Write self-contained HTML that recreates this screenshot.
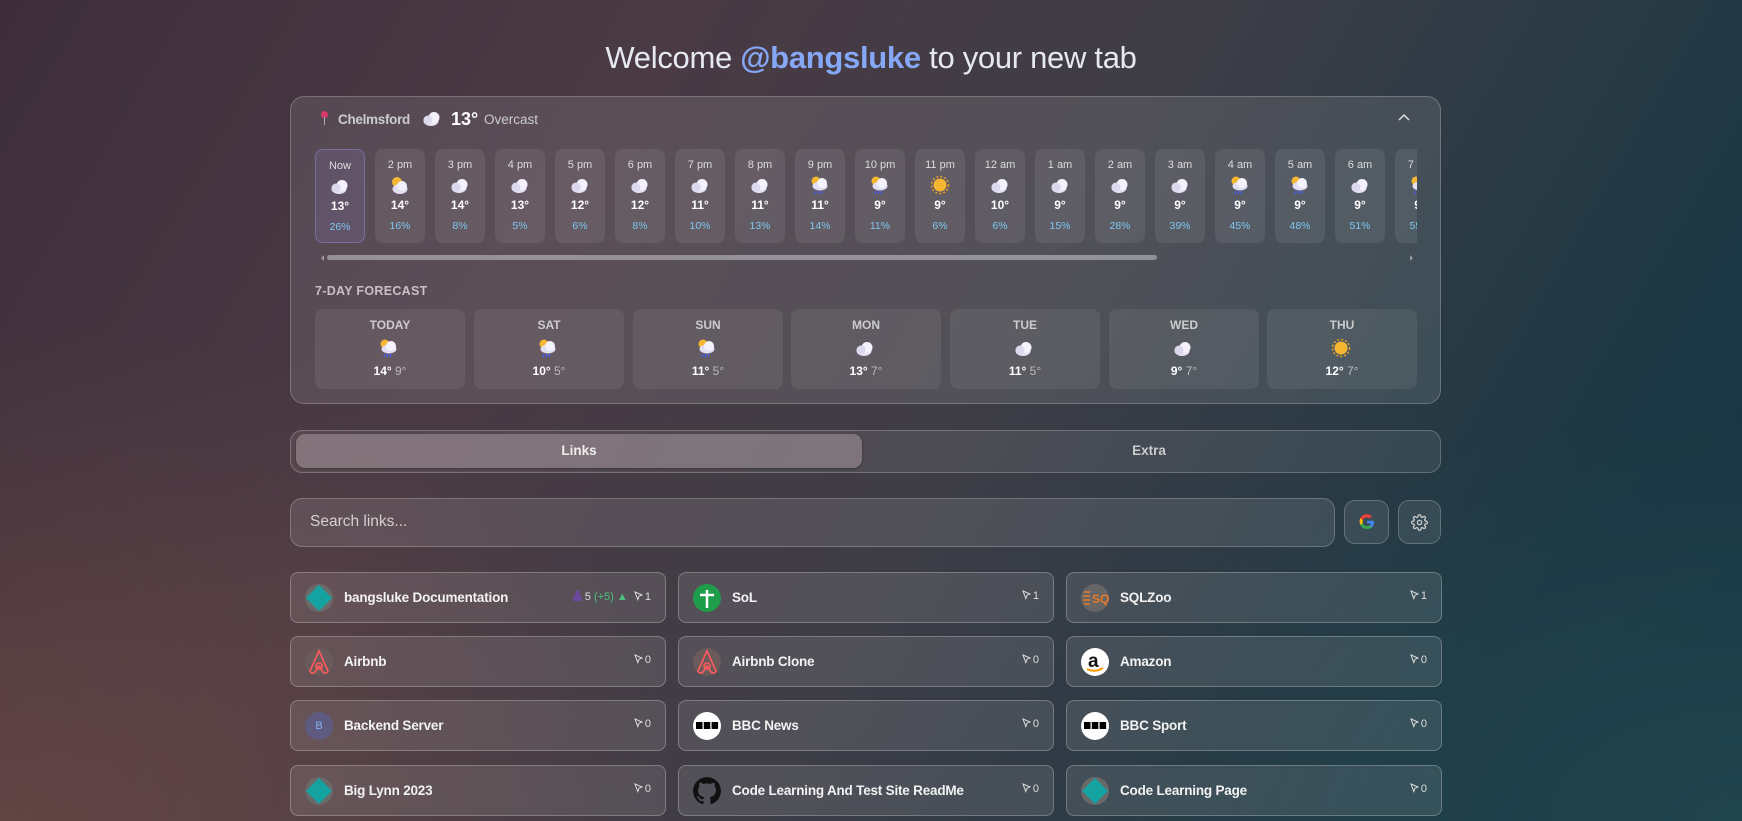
<!DOCTYPE html>
<html><head><meta charset="utf-8"><style>
*{box-sizing:border-box;margin:0;padding:0}
body{width:1742px;height:821px;overflow:hidden;font-family:"Liberation Sans",sans-serif;color:#fff;position:relative;
background:linear-gradient(120deg,#3d2e3a 0%,#4a3a44 30%,#3e3d46 55%,#1c3844 85%,#173844 100%);}
.bgo{position:absolute;inset:0;background:radial-gradient(ellipse 700px 500px at 0% 100%,rgba(120,80,70,.55),transparent),radial-gradient(ellipse 700px 400px at 100% 100%,rgba(40,80,85,.5),transparent)}
.a{position:absolute}
h1{position:absolute;top:40px;left:0;width:1742px;text-align:center;font-size:31px;font-weight:400;color:#e6e8f2;letter-spacing:-.3px}
h1 b{color:#86a7f5;font-weight:700}
.glass{background:rgba(255,255,255,.09);border:1px solid rgba(255,255,255,.22);border-radius:14px}
.hr{position:absolute;top:0;width:50px;height:94px;border-radius:8px;background:rgba(255,255,255,.08);text-align:center}
.hr .t{font-size:11px;color:#ddd;margin-top:10px}
.hr svg{display:block;margin:4px auto 0}
.hr .tp{font-size:12px;font-weight:700;margin-top:3px}
.hr .p{font-size:10.5px;color:#7ec8ef;margin-top:8px}
.dy{position:absolute;top:309px;width:150px;height:80px;border-radius:8px;background:rgba(255,255,255,.07);text-align:center}
.dy .n{font-size:12px;font-weight:700;color:#ccc;margin-top:9px}
.dy svg{display:block;margin:6px auto 0}
.dy .tp{font-size:12px;margin-top:4px;color:#bbb}.dy .tp b{color:#fff}
.lk{position:absolute;width:376px;height:51px;border-radius:8px;background:rgba(255,255,255,.1);border:1px solid rgba(255,255,255,.25)}
.lk .ic{position:absolute;left:14px;top:11px;width:28px;height:28px;border-radius:50%;overflow:hidden}
.lk .nm{position:absolute;left:53px;top:17px;font-size:13.5px;font-weight:700;color:#f2f2f2;letter-spacing:-.2px}
.lk .c{position:absolute;right:14px;top:17px;font-size:11px;color:#ddd}
.cur{display:inline-block;width:9px;height:10px;vertical-align:-1px;margin-right:2px}
</style></head><body><div class="bgo"></div>
<svg width="0" height="0" style="position:absolute"><defs>
<g id="cl"><ellipse cx="10" cy="13" rx="7.5" ry="5" fill="#e6e2f4"/><circle cx="13" cy="9.5" r="5.5" fill="#f4f2fc"/><circle cx="7" cy="12" r="4.5" fill="#dcd8ee"/></g>
<g id="sc"><circle cx="8" cy="7" r="5" fill="#f5b731"/><ellipse cx="11" cy="14" rx="7.5" ry="5" fill="#e2def4"/><circle cx="13" cy="11" r="5" fill="#f2f0fc"/></g>
<g id="rn"><circle cx="7" cy="6" r="4.5" fill="#f5b731"/><ellipse cx="11" cy="11" rx="7.5" ry="4.5" fill="#e2def4"/><circle cx="13" cy="8" r="5" fill="#f4f2fc"/><path d="M7 16l-1 3M10 16l-1 3M13 16l-1 3" stroke="#4a5de8" stroke-width="1.5"/></g>
<g id="sn"><circle cx="11" cy="10" r="6.5" fill="#f5b731"/><circle cx="11" cy="10" r="8.5" fill="none" stroke="#f0a020" stroke-width="1.5" stroke-dasharray="2 2"/></g>
<path id="cu" d="M1 1l7 3-3 1.2-1.2 3.3z" fill="none" stroke="#ddd" stroke-width="1"/>
</defs></svg>
<h1>Welcome <b>@bangsluke</b> to your new tab</h1>
<div class="a glass" style="left:290px;top:96px;width:1151px;height:308px;background:rgba(255,255,255,.1)"></div>
<div class="a" style="left:321px;top:111px;width:7px;height:7px;border-radius:50%;background:#d8396a"></div>
<div class="a" style="left:324px;top:117px;width:1px;height:8px;background:#aaa"></div>
<div class="a" style="left:338px;top:112px;font-size:13.5px;font-weight:700;color:#ccc;letter-spacing:-.3px">Chelmsford</div>
<svg class="a" style="left:421px;top:108px" width="22" height="20"><use href="#cl"/></svg>
<div class="a" style="left:451px;top:109px;font-size:18px;font-weight:700">13°</div>
<div class="a" style="left:484px;top:112px;font-size:13.5px;color:#ccc">Overcast</div>
<svg class="a" style="left:1398px;top:113px" width="12" height="8"><path d="M1 7l5-5 5 5" stroke="#ddd" stroke-width="1.5" fill="none"/></svg>
<div class="a" style="left:315px;top:149px;width:1102px;height:96px;overflow:hidden">
<div class="hr" style="left:0;background:rgba(140,130,200,.18);border:1px solid rgba(150,150,230,.45)"><div class="t">Now</div><svg width="22" height="20"><use href="#cl"/></svg><div class="tp">13°</div><div class="p">26%</div></div>
<div class="hr" style="left:60px"><div class="t">2 pm</div><svg width="22" height="20"><use href="#sc"/></svg><div class="tp">14°</div><div class="p">16%</div></div>
<div class="hr" style="left:120px"><div class="t">3 pm</div><svg width="22" height="20"><use href="#cl"/></svg><div class="tp">14°</div><div class="p">8%</div></div>
<div class="hr" style="left:180px"><div class="t">4 pm</div><svg width="22" height="20"><use href="#cl"/></svg><div class="tp">13°</div><div class="p">5%</div></div>
<div class="hr" style="left:240px"><div class="t">5 pm</div><svg width="22" height="20"><use href="#cl"/></svg><div class="tp">12°</div><div class="p">6%</div></div>
<div class="hr" style="left:300px"><div class="t">6 pm</div><svg width="22" height="20"><use href="#cl"/></svg><div class="tp">12°</div><div class="p">8%</div></div>
<div class="hr" style="left:360px"><div class="t">7 pm</div><svg width="22" height="20"><use href="#cl"/></svg><div class="tp">11°</div><div class="p">10%</div></div>
<div class="hr" style="left:420px"><div class="t">8 pm</div><svg width="22" height="20"><use href="#cl"/></svg><div class="tp">11°</div><div class="p">13%</div></div>
<div class="hr" style="left:480px"><div class="t">9 pm</div><svg width="22" height="20"><use href="#rn"/></svg><div class="tp">11°</div><div class="p">14%</div></div>
<div class="hr" style="left:540px"><div class="t">10 pm</div><svg width="22" height="20"><use href="#rn"/></svg><div class="tp">9°</div><div class="p">11%</div></div>
<div class="hr" style="left:600px"><div class="t">11 pm</div><svg width="22" height="20"><use href="#sn"/></svg><div class="tp">9°</div><div class="p">6%</div></div>
<div class="hr" style="left:660px"><div class="t">12 am</div><svg width="22" height="20"><use href="#cl"/></svg><div class="tp">10°</div><div class="p">6%</div></div>
<div class="hr" style="left:720px"><div class="t">1 am</div><svg width="22" height="20"><use href="#cl"/></svg><div class="tp">9°</div><div class="p">15%</div></div>
<div class="hr" style="left:780px"><div class="t">2 am</div><svg width="22" height="20"><use href="#cl"/></svg><div class="tp">9°</div><div class="p">28%</div></div>
<div class="hr" style="left:840px"><div class="t">3 am</div><svg width="22" height="20"><use href="#cl"/></svg><div class="tp">9°</div><div class="p">39%</div></div>
<div class="hr" style="left:900px"><div class="t">4 am</div><svg width="22" height="20"><use href="#rn"/></svg><div class="tp">9°</div><div class="p">45%</div></div>
<div class="hr" style="left:960px"><div class="t">5 am</div><svg width="22" height="20"><use href="#rn"/></svg><div class="tp">9°</div><div class="p">48%</div></div>
<div class="hr" style="left:1020px"><div class="t">6 am</div><svg width="22" height="20"><use href="#cl"/></svg><div class="tp">9°</div><div class="p">51%</div></div>
<div class="hr" style="left:1080px"><div class="t">7 am</div><svg width="22" height="20"><use href="#rn"/></svg><div class="tp">9°</div><div class="p">55%</div></div>
</div>
<div class="a" style="left:327px;top:255px;width:830px;height:5px;border-radius:3px;background:rgba(200,200,205,.55)"></div>
<div class="a" style="left:318px;top:255px;width:0;height:0;border:3px solid transparent;border-right-color:#999"></div>
<div class="a" style="left:1410px;top:255px;width:0;height:0;border:3px solid transparent;border-left-color:#999"></div>
<div class="a" style="left:315px;top:284px;font-size:12.5px;font-weight:700;color:#c8c0c4;letter-spacing:.3px">7-DAY FORECAST</div>
<div class="dy" style="left:315px"><div class="n">TODAY</div><svg width="24" height="22"><use href="#rn"/></svg><div class="tp"><b>14°</b> 9°</div></div>
<div class="dy" style="left:474px"><div class="n">SAT</div><svg width="24" height="22"><use href="#rn"/></svg><div class="tp"><b>10°</b> 5°</div></div>
<div class="dy" style="left:633px"><div class="n">SUN</div><svg width="24" height="22"><use href="#rn"/></svg><div class="tp"><b>11°</b> 5°</div></div>
<div class="dy" style="left:791px"><div class="n">MON</div><svg width="24" height="22"><use href="#cl"/></svg><div class="tp"><b>13°</b> 7°</div></div>
<div class="dy" style="left:950px"><div class="n">TUE</div><svg width="24" height="22"><use href="#cl"/></svg><div class="tp"><b>11°</b> 5°</div></div>
<div class="dy" style="left:1109px"><div class="n">WED</div><svg width="24" height="22"><use href="#cl"/></svg><div class="tp"><b>9°</b> 7°</div></div>
<div class="dy" style="left:1267px"><div class="n">THU</div><svg width="24" height="22"><use href="#sn"/></svg><div class="tp"><b>12°</b> 7°</div></div>

<div class="a glass" style="left:290px;top:430px;width:1151px;height:43px;border-radius:12px;background:rgba(255,255,255,.08)"></div>
<div class="a" style="left:296px;top:434px;width:566px;height:34px;border-radius:9px;background:rgba(200,185,190,.38);box-shadow:0 1px 3px rgba(0,0,0,.3)"></div>
<div class="a" style="left:296px;top:443px;width:566px;text-align:center;font-size:13.5px;font-weight:700;color:#eee">Links</div>
<div class="a" style="left:862px;top:443px;width:574px;text-align:center;font-size:13.5px;font-weight:700;color:#ccc">Extra</div>

<div class="a glass" style="left:290px;top:498px;width:1045px;height:49px;border-radius:12px;background:rgba(255,255,255,.1)"></div>
<div class="a" style="left:310px;top:513px;font-size:15.5px;color:#d4d0d2">Search links...</div>
<div class="a glass" style="left:1344px;top:500px;width:45px;height:44px;border-radius:11px"></div>
<svg class="a" style="left:1358px;top:513px" width="18" height="18" viewBox="0 0 18 18"><path d="M16 9.2c0-.6 0-1-.1-1.5H9v2.8h4a3.4 3.4 0 0 1-1.5 2.2v1.8h2.4C15.2 13.2 16 11.4 16 9.2z" fill="#4285f4"/><path d="M9 16c2 0 3.7-.7 4.9-1.8l-2.4-1.8c-.7.4-1.5.7-2.5.7-1.9 0-3.6-1.3-4.2-3.1H2.3v1.9A7 7 0 0 0 9 16z" fill="#34a853"/><path d="M4.8 10a4.2 4.2 0 0 1 0-2.7V5.4H2.3a7 7 0 0 0 0 6.3z" fill="#fbbc05"/><path d="M9 4.4c1.1 0 2 .4 2.8 1.1l2.1-2.1A7 7 0 0 0 2.3 5.4l2.5 1.9C5.4 5.6 7.1 4.4 9 4.4z" fill="#ea4335"/></svg>
<div class="a glass" style="left:1398px;top:500px;width:43px;height:44px;border-radius:11px"></div>
<svg class="a" style="left:1411px;top:514px" width="17" height="17" viewBox="0 0 24 24" fill="none" stroke="#ccc" stroke-width="1.8"><circle cx="12" cy="12" r="3"/><path d="M19.4 15a1.7 1.7 0 0 0 .3 1.8l.1.1a2 2 0 1 1-2.8 2.8l-.1-.1a1.7 1.7 0 0 0-1.8-.3 1.7 1.7 0 0 0-1 1.5V21a2 2 0 1 1-4 0v-.1a1.7 1.7 0 0 0-1.1-1.5 1.7 1.7 0 0 0-1.8.3l-.1.1a2 2 0 1 1-2.8-2.8l.1-.1a1.7 1.7 0 0 0 .3-1.8 1.7 1.7 0 0 0-1.5-1H3a2 2 0 1 1 0-4h.1a1.7 1.7 0 0 0 1.5-1.1 1.7 1.7 0 0 0-.3-1.8l-.1-.1a2 2 0 1 1 2.8-2.8l.1.1a1.7 1.7 0 0 0 1.8.3H9a1.7 1.7 0 0 0 1-1.5V3a2 2 0 1 1 4 0v.1a1.7 1.7 0 0 0 1 1.5 1.7 1.7 0 0 0 1.8-.3l.1-.1a2 2 0 1 1 2.8 2.8l-.1.1a1.7 1.7 0 0 0-.3 1.8V9a1.7 1.7 0 0 0 1.5 1H21a2 2 0 1 1 0 4h-.1a1.7 1.7 0 0 0-1.5 1z"/></svg>

<!-- row 1 -->
<div class="lk" style="left:290px;top:572px"><div class="ic" style="background:#6a6a6a"><svg width="28" height="28"><path d="M14 1L27 14 14 27 1 14z" fill="#14a3a0"/></svg></div><div class="nm">bangsluke Documentation</div><div class="c"><svg width="9" height="11" style="vertical-align:-1px"><circle cx="4.5" cy="3" r="2.5" fill="#6b4aa0"/><path d="M0 11q0-6 4.5-6t4.5 6z" fill="#6b4aa0"/></svg> 5 <span style="color:#4ec27a">(+5) &#9650;</span> &nbsp;<svg class="cur"><use href="#cu"/></svg>1</div></div>
<div class="lk" style="left:678px;top:572px"><div class="ic" style="background:#1e9e4a"><svg width="28" height="28"><path d="M14 6v18M7 11h14" stroke="#fff" stroke-width="2.5"/></svg></div><div class="nm">SoL</div><div class="c"><svg class="cur"><use href="#cu"/></svg>1</div></div>
<div class="lk" style="left:1066px;top:572px"><div class="ic" style="background:#666"><svg width="28" height="28"><path d="M3 8h6M2 12h7M2 16h7M3 20h6" stroke="#e87a2a" stroke-width="1.6"/><text x="11" y="19" font-size="12" font-weight="700" fill="#e87a2a" font-family="Liberation Sans">SQ</text></svg></div><div class="nm">SQLZoo</div><div class="c"><svg class="cur"><use href="#cu"/></svg>1</div></div>
<!-- row 2 -->
<div class="lk" style="left:290px;top:636px"><div class="ic" style="background:#6b5a5a"><svg width="28" height="28"><path d="M14 3L5 23c0 2 3 3 5 1l4-6 4 6c2 2 5 1 5-1L14 3zM14 15a3 3 0 1 0 0.1 0" stroke="#ff5a5f" stroke-width="1.6" fill="none"/></svg></div><div class="nm">Airbnb</div><div class="c"><svg class="cur"><use href="#cu"/></svg>0</div></div>
<div class="lk" style="left:678px;top:636px"><div class="ic" style="background:#6b5a5a"><svg width="28" height="28"><path d="M14 3L5 23c0 2 3 3 5 1l4-6 4 6c2 2 5 1 5-1L14 3zM14 15a3 3 0 1 0 0.1 0" stroke="#ff5a5f" stroke-width="1.6" fill="none"/></svg></div><div class="nm">Airbnb Clone</div><div class="c"><svg class="cur"><use href="#cu"/></svg>0</div></div>
<div class="lk" style="left:1066px;top:636px"><div class="ic" style="background:#fff"><svg width="28" height="28"><text x="7" y="19" font-size="19" font-weight="700" fill="#111" font-family="Liberation Sans">a</text><path d="M6 21q8 4 16-1" stroke="#f90" stroke-width="2" fill="none"/></svg></div><div class="nm">Amazon</div><div class="c"><svg class="cur"><use href="#cu"/></svg>0</div></div>
<!-- row 3 -->
<div class="lk" style="left:290px;top:700px"><div class="ic" style="background:#5f5b80;color:#8ab0f5;font-size:11px;text-align:center;line-height:28px">B</div><div class="nm">Backend Server</div><div class="c"><svg class="cur"><use href="#cu"/></svg>0</div></div>
<div class="lk" style="left:678px;top:700px"><div class="ic" style="background:#fff"><svg width="28" height="28"><rect x="3" y="10" width="6.5" height="7" fill="#000"/><rect x="10.8" y="10" width="6.5" height="7" fill="#000"/><rect x="18.6" y="10" width="6.5" height="7" fill="#000"/></svg></div><div class="nm">BBC News</div><div class="c"><svg class="cur"><use href="#cu"/></svg>0</div></div>
<div class="lk" style="left:1066px;top:700px"><div class="ic" style="background:#fff"><svg width="28" height="28"><rect x="3" y="10" width="6.5" height="7" fill="#000"/><rect x="10.8" y="10" width="6.5" height="7" fill="#000"/><rect x="18.6" y="10" width="6.5" height="7" fill="#000"/></svg></div><div class="nm">BBC Sport</div><div class="c"><svg class="cur"><use href="#cu"/></svg>0</div></div>
<!-- row 4 -->
<div class="lk" style="left:290px;top:765px"><div class="ic" style="background:#6a6a6a"><svg width="28" height="28"><path d="M14 1L27 14 14 27 1 14z" fill="#14a3a0"/></svg></div><div class="nm">Big Lynn 2023</div><div class="c"><svg class="cur"><use href="#cu"/></svg>0</div></div>
<div class="lk" style="left:678px;top:765px"><div class="ic"><svg width="28" height="28" viewBox="0 0 16 16"><path fill="#111" d="M8 0C3.6 0 0 3.6 0 8c0 3.5 2.3 6.5 5.5 7.6.4.1.5-.2.5-.4v-1.5c-2.2.5-2.7-1-2.7-1-.4-.9-.9-1.2-.9-1.2-.7-.5.1-.5.1-.5.8.1 1.2.8 1.2.8.7 1.3 1.9.9 2.3.7.1-.5.3-.9.5-1.1-1.8-.2-3.6-.9-3.6-4 0-.9.3-1.6.8-2.1-.1-.2-.4-1 .1-2.1 0 0 .7-.2 2.2.8.6-.2 1.3-.3 2-.3s1.4.1 2 .3c1.5-1 2.2-.8 2.2-.8.4 1.1.2 1.9.1 2.1.5.6.8 1.3.8 2.1 0 3.1-1.9 3.8-3.6 4 .3.3.5.8.5 1.5v2.2c0 .2.1.5.6.4C13.7 14.5 16 11.5 16 8c0-4.4-3.6-8-8-8z"/></svg></div><div class="nm">Code Learning And Test Site ReadMe</div><div class="c"><svg class="cur"><use href="#cu"/></svg>0</div></div>
<div class="lk" style="left:1066px;top:765px"><div class="ic" style="background:#6a6a6a"><svg width="28" height="28"><path d="M14 1L27 14 14 27 1 14z" fill="#14a3a0"/></svg></div><div class="nm">Code Learning Page</div><div class="c"><svg class="cur"><use href="#cu"/></svg>0</div></div>
</body></html>
